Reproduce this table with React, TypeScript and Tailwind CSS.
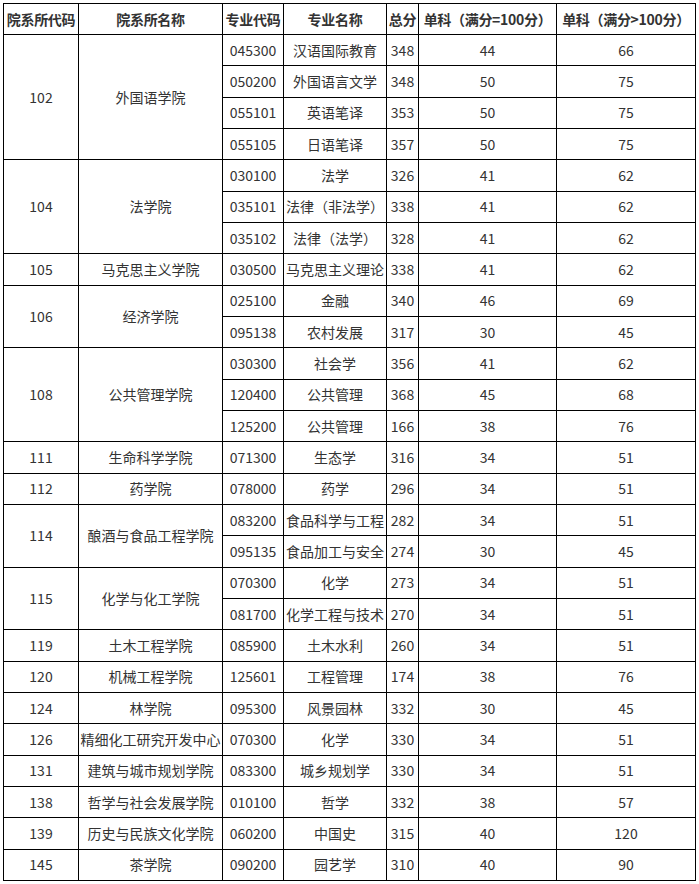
import React from 'react';

type Group = {
  code: string;
  name: string;
  rows: [string, string, string, string, string][];
};

const GROUPS: Group[] = [
  {
    code: '102',
    name: '外国语学院',
    rows: [
      ['045300', '汉语国际教育', '348', '44', '66'],
      ['050200', '外国语言文学', '348', '50', '75'],
      ['055101', '英语笔译', '353', '50', '75'],
      ['055105', '日语笔译', '357', '50', '75'],
    ],
  },
  {
    code: '104',
    name: '法学院',
    rows: [
      ['030100', '法学', '326', '41', '62'],
      ['035101', '法律（非法学）', '338', '41', '62'],
      ['035102', '法律（法学）', '328', '41', '62'],
    ],
  },
  { code: '105', name: '马克思主义学院', rows: [['030500', '马克思主义理论', '338', '41', '62']] },
  {
    code: '106',
    name: '经济学院',
    rows: [
      ['025100', '金融', '340', '46', '69'],
      ['095138', '农村发展', '317', '30', '45'],
    ],
  },
  {
    code: '108',
    name: '公共管理学院',
    rows: [
      ['030300', '社会学', '356', '41', '62'],
      ['120400', '公共管理', '368', '45', '68'],
      ['125200', '公共管理', '166', '38', '76'],
    ],
  },
  { code: '111', name: '生命科学学院', rows: [['071300', '生态学', '316', '34', '51']] },
  { code: '112', name: '药学院', rows: [['078000', '药学', '296', '34', '51']] },
  {
    code: '114',
    name: '酿酒与食品工程学院',
    rows: [
      ['083200', '食品科学与工程', '282', '34', '51'],
      ['095135', '食品加工与安全', '274', '30', '45'],
    ],
  },
  {
    code: '115',
    name: '化学与化工学院',
    rows: [
      ['070300', '化学', '273', '34', '51'],
      ['081700', '化学工程与技术', '270', '34', '51'],
    ],
  },
  { code: '119', name: '土木工程学院', rows: [['085900', '土木水利', '260', '34', '51']] },
  { code: '120', name: '机械工程学院', rows: [['125601', '工程管理', '174', '38', '76']] },
  { code: '124', name: '林学院', rows: [['095300', '风景园林', '332', '30', '45']] },
  { code: '126', name: '精细化工研究开发中心', rows: [['070300', '化学', '330', '34', '51']] },
  { code: '131', name: '建筑与城市规划学院', rows: [['083300', '城乡规划学', '330', '34', '51']] },
  { code: '138', name: '哲学与社会发展学院', rows: [['010100', '哲学', '332', '38', '57']] },
  { code: '139', name: '历史与民族文化学院', rows: [['060200', '中国史', '315', '40', '120']] },
  { code: '145', name: '茶学院', rows: [['090200', '园艺学', '310', '40', '90']] },
];

const HEADERS = ['院系所代码', '院系所名称', '专业代码', '专业名称', '总分', '单科（满分=100分）', '单科（满分>100分）'];

const cell = 'border border-black text-center align-middle p-0 whitespace-nowrap';

export default function App() {
  return (
    <div className="bg-white w-[699px] h-[884px] pt-[3px] pl-[3px] text-[#333] text-[14px] font-['Microsoft_YaHei','Noto_Sans_CJK_SC',sans-serif]">
      <table className="table-fixed border-collapse w-[692px]">
        <colgroup>
          <col className="w-[75px]" />
          <col className="w-[144px]" />
          <col className="w-[61px]" />
          <col className="w-[103px]" />
          <col className="w-[32px]" />
          <col className="w-[138px]" />
          <col className="w-[139px]" />
        </colgroup>
        <thead>
          <tr className="h-[31px]">
            {HEADERS.map((h) => (
              <th key={h} className={`${cell} font-bold text-[#333] tracking-[-0.3px]`}>
                {h}
              </th>
            ))}
          </tr>
        </thead>
        <tbody>
          {GROUPS.map((g) =>
            g.rows.map((r, i) => (
              <tr key={g.code + r[0] + i} className="h-[31.33px]">
                {i === 0 && (
                  <>
                    <td rowSpan={g.rows.length} className={cell}>
                      {g.code}
                    </td>
                    <td rowSpan={g.rows.length} className={cell}>
                      {g.name}
                    </td>
                  </>
                )}
                {r.map((v, j) => (
                  <td key={j} className={cell}>
                    {v}
                  </td>
                ))}
              </tr>
            ))
          )}
        </tbody>
      </table>
    </div>
  );
}
